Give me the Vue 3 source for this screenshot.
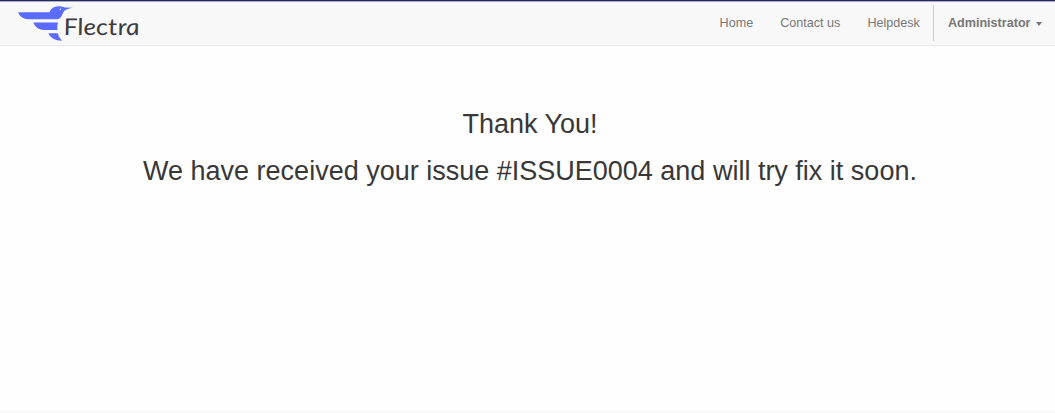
<script setup>
const links = ['Home', 'Contact us', 'Helpdesk']
</script>

<template>
  <div class="page">
    <header class="navbar">
      <a class="brand">
        <svg width="125" height="42" viewBox="0 0 125 42" aria-label="Flectra">
          <g fill="#5b6cfa">
            <path d="M3 9.3H34.5C35.5 6 39 3.2 43.5 3.2C46 3.2 48 3.9 50 4.4L58 4.7C54 5.4 51 6.2 49.5 7.8C46.5 10.5 47.5 16.3 41.5 16.3H13.5C8 16.3 4.5 13 3 9.3Z" />
            <path d="M18.3 19.6H43Q41.8 23.5 42.3 27H29C23.5 27 20 24 18.3 19.6Z" />
            <path d="M33.5 30.2H42.8Q43.6 34.5 47 37.8C40 37.5 35 34.8 33.5 30.2Z" />
          </g>
          <circle cx="45.3" cy="6.2" r=".7" fill="#f8f8f8" />
          <text class="wordmark" transform="translate(49.4 31.8) skewX(7)" textLength="76" lengthAdjust="spacingAndGlyphs">Flectra</text>
        </svg>
      </a>
      <nav class="links">
        <a v-for="link in links" :key="link">{{ link }}</a>
        <span class="divider"></span>
        <a class="user">Administrator<i class="caret"></i></a>
      </nav>
    </header>
    <main class="message">
      <h2 class="thanks">Thank You!</h2>
      <h2>We have received your issue #ISSUE0004 and will try fix it soon.</h2>
    </main>
    <footer class="footer"></footer>
  </div>
</template>

<style>
body { background: #fefefe; }
</style>

<style scoped>
.page {
  height: 413px;
  display: flex;
  flex-direction: column;
  overflow: hidden;
  font-family: "Liberation Sans", Arial, sans-serif;
}
.navbar {
  box-sizing: border-box;
  height: 46px;
  flex: none;
  display: flex;
  justify-content: space-between;
  background: #f8f8f8;
  border-top: 1px solid #222a60;
  border-bottom: 1px solid #e7e7e7;
  box-shadow: inset 0 1px #a9acc1;
}
.brand { margin: 2px 0 0 15px; height: 42px; }
.brand svg { display: block; overflow: visible; }
.wordmark { font: italic 23px Lato, sans-serif; fill: #3d3d3f; }
.links {
  display: flex;
  align-items: center;
  height: 44px;
  color: #777;
  font-size: 12.6px;
  white-space: nowrap;
}
.links a { margin-right: 27px; }
.links a:nth-child(3) { margin-right: 13.5px; }
.divider { width: 1px; height: 36px; background: #ccc; margin-right: 13.5px; }
.links .user { margin-right: 13px; font-weight: bold; display: flex; align-items: center; }
.caret {
  margin: 1px 0 0 5.5px;
  border: 3.5px solid transparent;
  border-top: 4px solid #777;
  border-bottom: 0;
}
.message { flex: 1; padding-top: 61px; text-align: center; color: #383838; }
h2 { margin: 0 0 0 5px; font-size: 27px; font-weight: 400; line-height: 34px; }
.thanks { margin-bottom: 13px; }
.footer { height: 2px; flex: none; background: #f8f8f8; }
</style>
